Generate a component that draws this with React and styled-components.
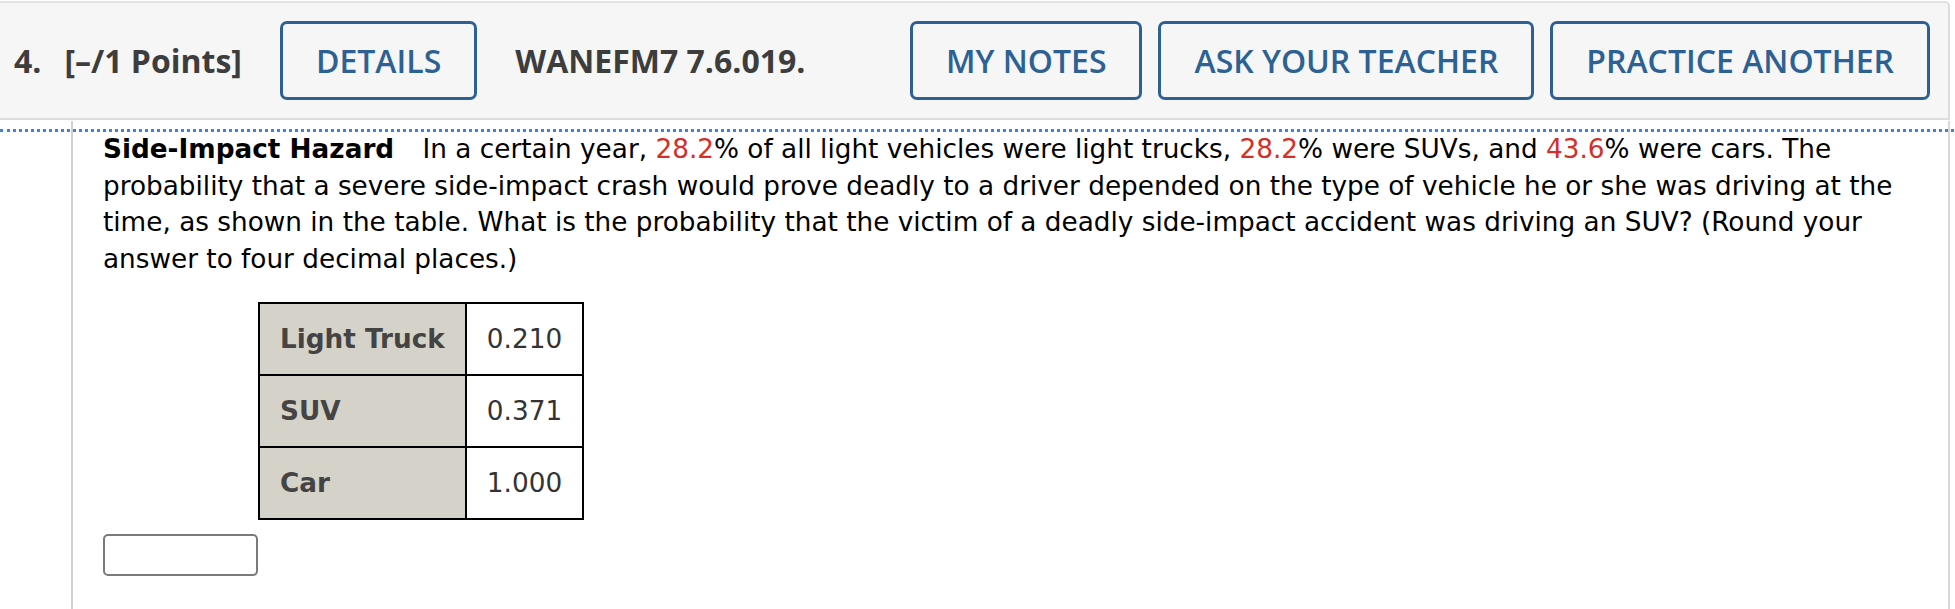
import React from "react";
import styled, { createGlobalStyle } from "styled-components";

const GlobalStyle = createGlobalStyle`
  html, body {
    margin: 0;
    padding: 0;
    background: #ffffff;
  }
  body {
    font-family: "DejaVu Sans", Verdana, sans-serif;
  }
`;

const Page = styled.div`
  position: relative;
  width: 1955px;
  height: 609px;
  overflow: hidden;
  padding-top: 1px;
  box-sizing: border-box;
`;

const Header = styled.header`
  width: 1950px;
  height: 119px;
  box-sizing: border-box;
  display: flex;
  align-items: center;
  justify-content: space-between;
  padding: 0 18px 0 14px;
  background: #f6f6f6;
  border-top: 2px solid #e2e2e2;
  border-bottom: 2px solid #dddddd;
  border-right: 2px solid #dddddd;
  border-top-right-radius: 5px;
  font-family: "Open Sans", "Noto Sans", sans-serif;
`;

const Group = styled.div`
  display: flex;
  align-items: center;
  gap: ${(p) => p.$gap || "38px"};
`;

const Title = styled.span`
  font-size: 32px;
  font-weight: 700;
  color: #3d3d3d;
  white-space: nowrap;
  margin-left: ${(p) => p.$ml || "0"};
`;

const HeaderButton = styled.button`
  height: 79px;
  box-sizing: border-box;
  padding: 0 33px;
  border: 3px solid #2d6194;
  border-radius: 7px;
  background: transparent;
  color: #2d6194;
  font-family: "Open Sans", "Noto Sans", sans-serif;
  font-size: 32px;
  font-weight: 600;
  white-space: nowrap;
  cursor: pointer;
`;

const Body = styled.section`
  margin: 1px 0 0 71px;
  width: 1879px;
  height: 489px;
  box-sizing: border-box;
  border-left: 2px solid #d0d0d0;
  border-right: 2px solid #d8d8d8;
  padding: 10px 40px 0 30px;
`;

const FocusRule = styled.div`
  position: absolute;
  top: 129px;
  left: 0;
  width: 1954px;
  border-top: 3px dotted #3f83e4;
`;

const Question = styled.p`
  margin: 0;
  font-size: 26.3px;
  line-height: 36.5px;
  color: #000000;
`;

const Lead = styled.strong`
  font-weight: 700;
  margin-right: 20px;
`;

const Red = styled.span`
  color: #d2302a;
`;

const DataTable = styled.table`
  margin: 25px 0 0 155px;
  border-collapse: collapse;
  font-size: 26.3px;
`;

const Cell = styled.td`
  height: 72px;
  box-sizing: border-box;
  padding: 0 20px;
  border: 2px solid #000000;
  background: ${(p) => (p.$head ? "#d5d2c9" : "#ffffff")};
  color: ${(p) => (p.$head ? "#444444" : "#333333")};
  font-weight: ${(p) => (p.$head ? 700 : 400)};
  white-space: nowrap;
`;

const AnswerInput = styled.input`
  display: block;
  margin-top: 14px;
  width: 155px;
  height: 42px;
  box-sizing: border-box;
  border: 2px solid #7a7a7a;
  border-radius: 5px;
  background: #ffffff;
`;

const rows = [
  { label: "Light Truck", value: "0.210" },
  { label: "SUV", value: "0.371" },
  { label: "Car", value: "1.000" }
];

export default function App() {
  return (
    <Page>
      <GlobalStyle />
      <Header>
        <Group>
          <Title>4.</Title>
          <Title $ml="-15px">[–/1 Points]</Title>
          <HeaderButton>DETAILS</HeaderButton>
          <Title>WANEFM7 7.6.019.</Title>
        </Group>
        <Group $gap="16px">
          <HeaderButton>MY NOTES</HeaderButton>
          <HeaderButton>ASK YOUR TEACHER</HeaderButton>
          <HeaderButton>PRACTICE ANOTHER</HeaderButton>
        </Group>
      </Header>
      <FocusRule />
      <Body>
        <Question>
          <Lead>Side-Impact Hazard</Lead> In a certain year, <Red>28.2</Red>% of all light vehicles
          were light trucks, <Red>28.2</Red>% were SUVs, and <Red>43.6</Red>% were cars. The
          probability that a severe side-impact crash would prove deadly to a driver depended on the
          type of vehicle he or she was driving at the time, as shown in the table. What is the
          probability that the victim of a deadly side-impact accident was driving an SUV? (Round
          your answer to four decimal places.)
        </Question>
        <DataTable>
          <tbody>
            {rows.map((r) => (
              <tr key={r.label}>
                <Cell $head>{r.label}</Cell>
                <Cell>{r.value}</Cell>
              </tr>
            ))}
          </tbody>
        </DataTable>
        <AnswerInput type="text" />
      </Body>
    </Page>
  );
}
